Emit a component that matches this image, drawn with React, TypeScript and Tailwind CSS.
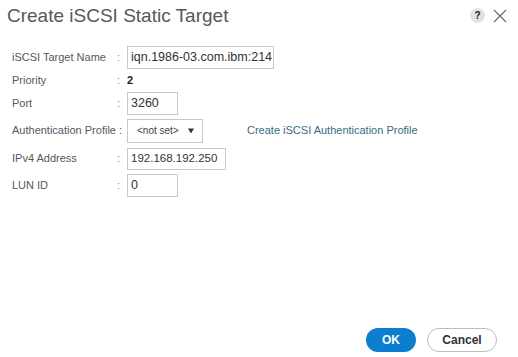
import React from "react";

const font = { fontFamily: '"Liberation Sans", Arial, sans-serif' };

function Label({ children }: { children: React.ReactNode }) {
  return <div className="w-[105px] text-[11px] text-[#58585b]">{children}</div>;
}
function Colon() {
  return <div className="w-[10px] text-[11px] text-[#8a8a8a]">:</div>;
}

export default function App() {
  return (
    <div className="w-[518px] h-[357px] bg-white flex flex-col relative" style={font}>
      <div className="flex items-center h-[31px] pl-[7px] pr-[11px]">
        <div className="text-[19px] text-[#58585b] leading-none">Create iSCSI Static Target</div>
        <div className="ml-auto flex items-center gap-[8px]">
          <div className="w-[15px] h-[15px] rounded-full bg-[#e3e3e3] flex items-center justify-center text-[10px] font-bold text-[#222]">?</div>
          <svg width="14" height="14" viewBox="0 0 14 14">
            <path d="M1 1 L13 13 M13 1 L1 13" stroke="#6a6a6a" strokeWidth="1.2" />
          </svg>
        </div>
      </div>
      <div className="flex flex-col pl-[12px] mt-[15px]">
        <div className="flex items-center h-[23px]">
          <Label>iSCSI Target Name</Label>
          <Colon />
          <div className="w-[147px] h-[23px] border border-[#c8c8c8] flex items-center pl-[3px] overflow-hidden whitespace-nowrap text-[12.5px] text-[#333]">
            iqn.1986-03.com.ibm:214
          </div>
        </div>
        <div className="flex items-center h-[22px]">
          <Label>Priority</Label>
          <Colon />
          <div className="text-[11px] font-bold text-[#222]">2</div>
        </div>
        <div className="flex items-center h-[24px]">
          <Label>Port</Label>
          <Colon />
          <div className="w-[51px] h-[23px] border border-[#c8c8c8] flex items-center pl-[3px] text-[12.5px] text-[#333]">3260</div>
        </div>
        <div className="flex items-center h-[29px] mt-[1px]">
          <div className="w-[115px] text-[11px] text-[#58585b]">Authentication Profile :</div>
          <div className="w-[76px] h-[24px] border border-[#c8c8c8] flex items-center pl-[9px] text-[10px] text-[#444]">
            &lt;not set&gt;
            <svg width="6" height="6" viewBox="0 0 7 6" className="ml-[9px]">
              <path d="M0 0 L7 0 L3.5 6 Z" fill="#333" />
            </svg>
          </div>
          <div className="ml-[44px] text-[11px] text-[#3b6a86]">Create iSCSI Authentication Profile</div>
        </div>
        <div className="flex items-center h-[27px]">
          <Label>IPv4 Address</Label>
          <Colon />
          <div className="w-[99px] h-[22px] border border-[#c8c8c8] flex items-center pl-[3px] text-[11.5px] text-[#333]">192.168.192.250</div>
        </div>
        <div className="flex items-center h-[27px]">
          <Label>LUN ID</Label>
          <Colon />
          <div className="w-[51px] h-[23px] border border-[#c8c8c8] flex items-center pl-[3px] text-[12.5px] text-[#333]">0</div>
        </div>
      </div>
      <div className="mt-auto flex justify-end gap-[11px] pr-[21px] pb-[5px]">
        <div className="w-[50px] h-[24px] rounded-full bg-[#0b7ed0] text-white text-[12px] font-bold flex items-center justify-center">OK</div>
        <div className="w-[70px] h-[24px] rounded-full border border-[#bdbdbd] bg-white text-[#333] text-[12px] font-bold flex items-center justify-center">Cancel</div>
      </div>
    </div>
  );
}
